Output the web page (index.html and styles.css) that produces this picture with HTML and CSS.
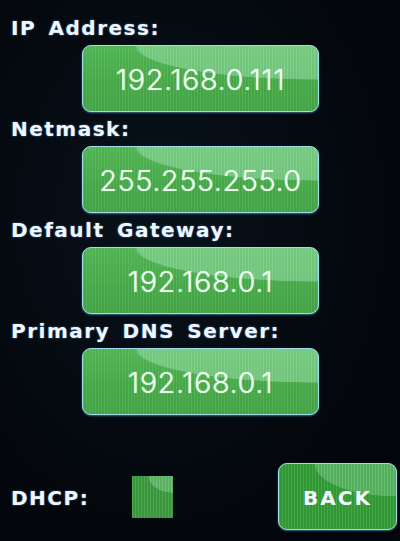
FILE: index.html
```html
<!DOCTYPE html>
<html>
<head>
<meta charset="utf-8">
<link rel="stylesheet" href="styles.css">
</head>
<body>
<div class="screen">
  <div class="field">
    <div class="label">IP Address:</div>
    <div class="btn value">192.168.0.111</div>
  </div>
  <div class="field">
    <div class="label">Netmask:</div>
    <div class="btn value">255.255.255.0</div>
  </div>
  <div class="field">
    <div class="label">Default Gateway:</div>
    <div class="btn value">192.168.0.1</div>
  </div>
  <div class="field">
    <div class="label">Primary DNS Server:</div>
    <div class="btn value">192.168.0.1</div>
  </div>
  <div class="bottom">
    <div class="label dhcp">DHCP:</div>
    <div class="check"></div>
    <div class="btn back">BACK</div>
  </div>
</div>
</body>
</html>
```

FILE: styles.css
```css
html, body {
  margin: 0;
  padding: 0;
  background: #04080d;
}
.screen {
  width: 400px;
  height: 541px;
  box-sizing: border-box;
  padding: 17px 3px 0 11px;
  display: flex;
  flex-direction: column;
  gap: 6px;
  background: radial-gradient(ellipse at 40% 40%, #08111a 0%, #03060a 80%);
  overflow: hidden;
}
.field {
  display: flex;
  flex-direction: column;
  gap: 6px;
}
.label {
  font-family: "DejaVu Sans", sans-serif;
  font-weight: bold;
  font-size: 20px;
  line-height: 22px;
  letter-spacing: 1.5px;
  word-spacing: 4px;
  color: #eef6ff;
  text-shadow: 0 0 2px rgba(110, 170, 230, 0.7);
}
.btn {
  box-sizing: border-box;
  border: 1.5px solid #9fdcea;
  border-radius: 9px;
  background-color: #4aaf4c;
  background-image:
    repeating-linear-gradient(90deg, rgba(255,255,255,0.07) 0 1px, rgba(0,0,0,0.04) 1px 3px),
    radial-gradient(ellipse 78% 52% at 100% 0%, rgba(170, 235, 190, 0.45) 0 98%, rgba(170,235,190,0) 100%),
    linear-gradient(180deg, #52b955 0%, #48ad4a 60%, #45a848 100%);
  box-shadow: 0 1px 2px rgba(120, 200, 255, 0.5);
  display: flex;
  align-items: center;
  justify-content: center;
  color: #eefff0;
}
.value {
  margin-left: 71px;
  width: 237px;
  height: 67px;
  font-family: "Inter", "DejaVu Sans", sans-serif;
  font-weight: 300;
  font-size: 29px;
  letter-spacing: 0.5px;
  padding-top: 2px;
  text-shadow: 0 0 1px rgba(220, 255, 230, 0.8);
}
.bottom {
  margin-top: 42px;
  display: flex;
  align-items: center;
  height: 67px;
}
.dhcp {
  width: 121px;
  padding-top: 2px;
}
.check {
  width: 41px;
  height: 42px;
  background-color: #3d9e3f;
  background-image:
    repeating-linear-gradient(90deg, rgba(255,255,255,0.08) 0 1px, rgba(0,0,0,0.05) 1px 3px),
    radial-gradient(ellipse 60% 40% at 100% 0%, rgba(170,235,190,0.35) 0 98%, rgba(170,235,190,0) 100%);
}
.back {
  margin-left: auto;
  width: 119px;
  height: 67px;
  background-color: #34a037;
  background-image:
    repeating-linear-gradient(90deg, rgba(255,255,255,0.08) 0 1px, rgba(0,0,0,0.06) 1px 3px),
    radial-gradient(ellipse 70% 50% at 100% 0%, rgba(160, 230, 180, 0.35) 0 98%, rgba(160,230,180,0) 100%);
  font-family: "DejaVu Sans", sans-serif;
  font-weight: bold;
  font-size: 20px;
  letter-spacing: 2px;
  color: #f2f8ff;
  padding-top: 2px;
}
```
